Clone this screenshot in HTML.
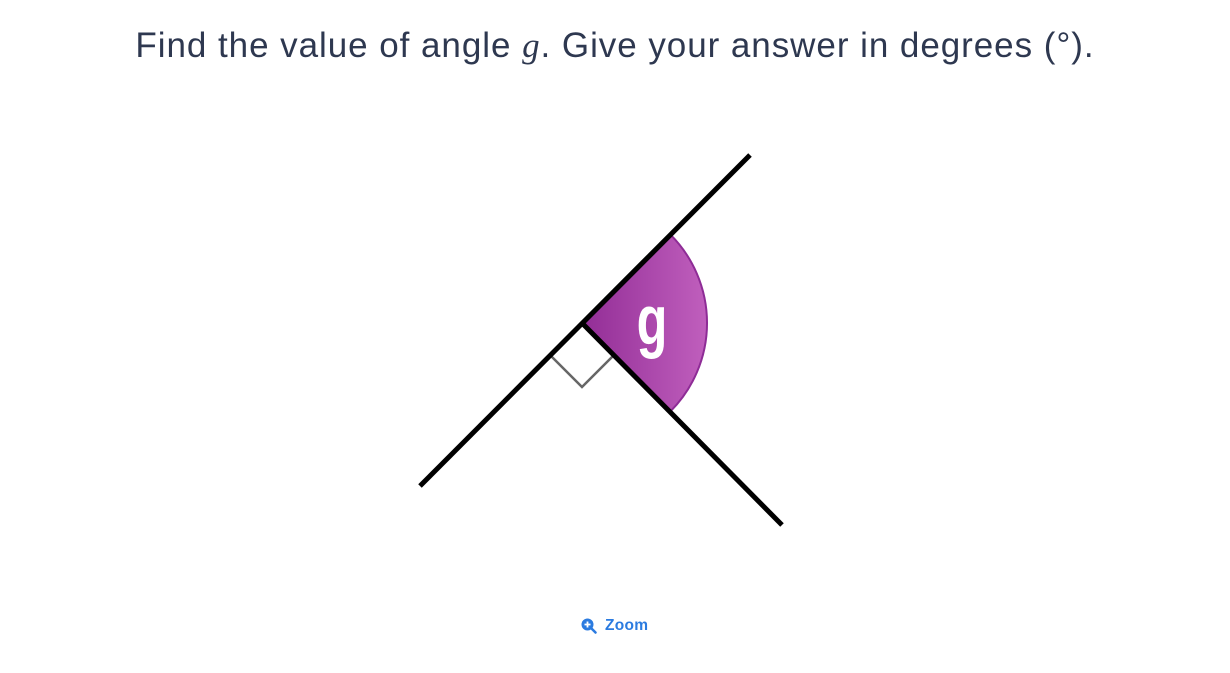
<!DOCTYPE html>
<html><head><style>
body{margin:0;width:1230px;height:673px;background:#fff;overflow:hidden;font-family:"Liberation Sans",sans-serif}
h1{position:absolute;top:26px;left:0;width:1230px;text-align:center;margin:0;font-weight:normal;font-size:35px;color:#2e3850;letter-spacing:0.95px}
.z{position:absolute;left:581px;top:617px;color:#2b7be0;font-weight:bold;font-size:15.5px;display:flex;align-items:center;gap:8px;letter-spacing:0.3px}
</style></head><body>
<h1>Find the value of angle <i style="font-family:'Liberation Serif',serif">g</i>. Give your answer in degrees (°).</h1>
<svg width="1230" height="673" style="position:absolute;left:0;top:0">
<defs><linearGradient id="g" x1="0" y1="0" x2="1" y2="0"><stop offset="0" stop-color="#922d96"/><stop offset="1" stop-color="#c05fbd"/></linearGradient></defs>
<path d="M582 323 L670.4 234.6 A125 125 0 0 1 670.4 411.4 Z" fill="url(#g)" stroke="#8e2c96" stroke-width="2"/>
<polyline points="551,356 582,387 613,356" fill="none" stroke="#666" stroke-width="2.5"/>
<line x1="420" y1="486" x2="750" y2="155" stroke="#000" stroke-width="5"/>
<line x1="582" y1="323" x2="782" y2="525" stroke="#000" stroke-width="5"/>
<text transform="translate(652,344) scale(0.72,1)" text-anchor="middle" font-weight="bold" font-size="70" fill="#fff">g</text>
</svg>
<div class="z"><svg width="16" height="16" viewBox="0 0 16 16"><circle cx="6.5" cy="6.5" r="6" fill="#2b7be0"/><path d="M6.5 3.5v6M3.5 6.5h6" stroke="#fff" stroke-width="1.8"/><path d="M10.5 10.5l4 4" stroke="#2b7be0" stroke-width="2.5" stroke-linecap="round"/></svg>Zoom</div>
</body></html>
